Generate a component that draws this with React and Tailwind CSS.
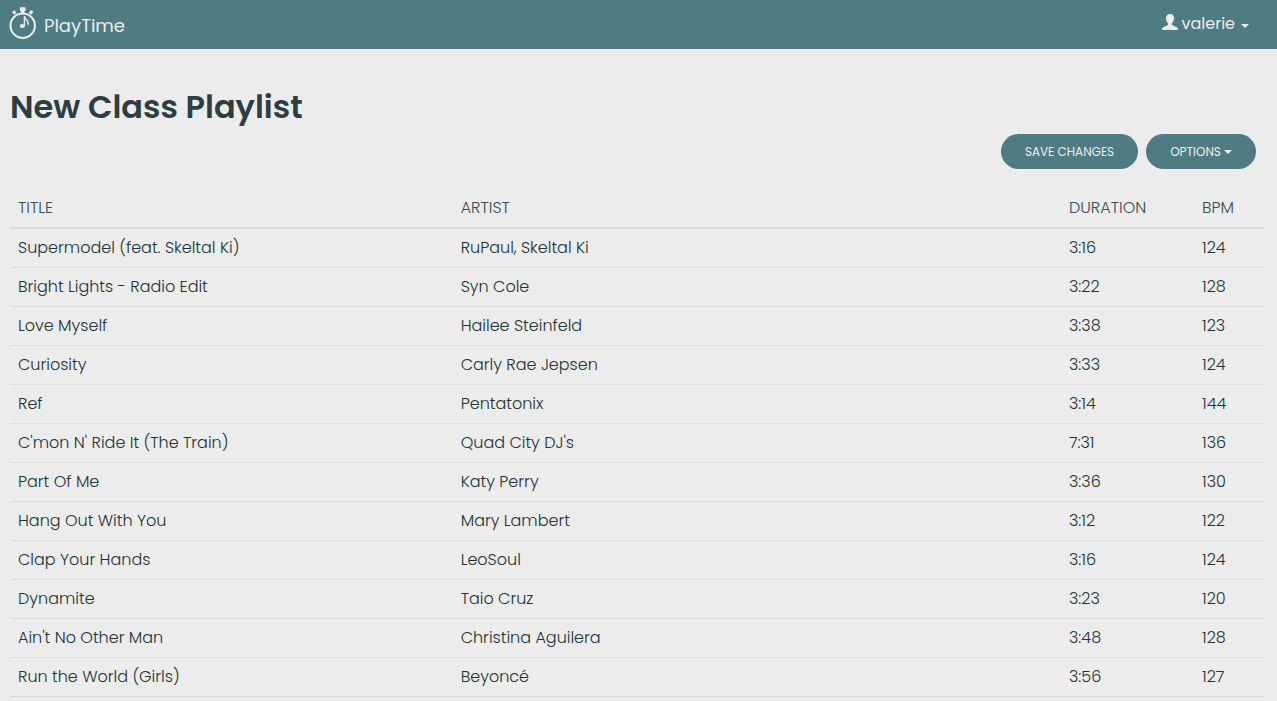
const tracks = [
  ["Supermodel (feat. Skeltal Ki)", "RuPaul, Skeltal Ki", "3:16", 124],
  ["Bright Lights - Radio Edit", "Syn Cole", "3:22", 128],
  ["Love Myself", "Hailee Steinfeld", "3:38", 123],
  ["Curiosity", "Carly Rae Jepsen", "3:33", 124],
  ["Ref", "Pentatonix", "3:14", 144],
  ["C'mon N' Ride It (The Train)", "Quad City DJ's", "7:31", 136],
  ["Part Of Me", "Katy Perry", "3:36", 130],
  ["Hang Out With You", "Mary Lambert", "3:12", 122],
  ["Clap Your Hands", "LeoSoul", "3:16", 124],
  ["Dynamite", "Taio Cruz", "3:23", 120],
  ["Ain't No Other Man", "Christina Aguilera", "3:48", 128],
  ["Run the World (Girls)", "Beyoncé", "3:56", 127],
];

function Logo() {
  return (
    <svg width="28" height="34" viewBox="0 0 28 34" fill="none" stroke="#ececec" aria-hidden="true">
      <circle cx="13.7" cy="19.7" r="12.2" strokeWidth="2" />
      <path d="M10.900 1.200h5.700v3.800h-1.200v2.400h-3.300V5h-1.200z" fill="#ececec" stroke="none" />
      <path d="M4.100 7.400 6.600 5.500M20.800 5.500l2.500 1.900" strokeWidth="3.600" />
      <ellipse cx="13.300" cy="20" rx="2.600" ry="2.100" fill="#ececec" stroke="none" />
      <path d="M15.400 20V10.200c.7 3.500 5 4.500 3.600 8.600" strokeWidth="1.400" />
    </svg>
  );
}

function UserIcon() {
  return (
    <svg width="16" height="16" viewBox="0 0 16 16" fill="#ececec" aria-hidden="true">
      <path d="M8 0C5.500 0 4 1.600 4 4.200c0 2.200.9 4.200 2.100 5.200v1.300C5.700 11.500 3.300 12.100 1.600 12.900.5 13.500 0 14.200 0 16h16c0-1.800-.5-2.500-1.600-3.100-1.700-.8-4.100-1.400-4.500-2.200V9.400C11.100 8.400 12 6.400 12 4.200 12 1.600 10.500 0 8 0z" />
    </svg>
  );
}

function Caret() {
  return (
    <svg width="8" height="4" viewBox="0 0 8 4" fill="currentColor" aria-hidden="true">
      <path d="M0 0h8L4 4z" />
    </svg>
  );
}

export default function App() {
  return (
    <div className="min-h-screen bg-[#ececec] text-[#2d3d41] font-['Poppins','Inter',sans-serif]">
      <header className="flex h-[49px] items-center justify-between bg-[#4e7c82] pr-7 pl-[9px] text-[#ececec]">
        <a href="#" className="flex items-center gap-[7px] text-lg">
          <span className="pb-[3px]"><Logo /></span>
          <span className="pt-[2px]">PlayTime</span>
        </a>
        <button type="button" className="flex items-center gap-1 pb-[2px] text-base">
          <span className="pb-1"><UserIcon /></span>
          <span>valerie</span>
          <span className="pt-1 pl-[2px]"><Caret /></span>
        </button>
      </header>
      <main className="px-[10px] pt-9">
        <h1 className="text-[32px] leading-[44px] font-semibold">New Class Playlist</h1>
        <div className="mt-[5px] flex justify-end gap-2 pr-[11px]">
          <button type="button" className="h-[35px] w-[137px] rounded-full bg-[#4e7c82] text-xs text-[#ececec]">
            SAVE CHANGES
          </button>
          <button type="button" className="flex h-[35px] w-[110px] items-center justify-center gap-[3px] rounded-full bg-[#4e7c82] text-xs text-[#ececec]">
            OPTIONS
            <Caret />
          </button>
        </div>
        <div className="pt-[18px] pr-[3px]">
          <table className="w-full table-fixed border-separate border-spacing-0 text-left text-base font-light text-[#223236]">
            <thead>
              <tr className="h-[42px]">
                <th scope="col" className="w-[35.3%] border-b-2 border-[#dcdcdc] px-2 pt-[2px] font-light text-[#3c4a4d]">TITLE</th>
                <th scope="col" className="border-b-2 border-[#dcdcdc] px-2 pt-[2px] font-light text-[#3c4a4d]">ARTIST</th>
                <th scope="col" className="w-[133px] border-b-2 border-[#dcdcdc] px-2 pt-[2px] font-light text-[#3c4a4d]">DURATION</th>
                <th scope="col" className="w-[70px] border-b-2 border-[#dcdcdc] px-2 pt-[2px] font-light text-[#3c4a4d]">BPM</th>
              </tr>
            </thead>
            <tbody>
              {tracks.map(([title, artist, duration, bpm]) => (
                <tr key={title} className="h-[39px]">
                  <td className="border-b border-[#dcdcdc] px-2">{title}</td>
                  <td className="border-b border-[#dcdcdc] px-2">{artist}</td>
                  <td className="border-b border-[#dcdcdc] px-2">{duration}</td>
                  <td className="border-b border-[#dcdcdc] px-2">{bpm}</td>
                </tr>
              ))}
            </tbody>
          </table>
        </div>
      </main>
    </div>
  );
}
